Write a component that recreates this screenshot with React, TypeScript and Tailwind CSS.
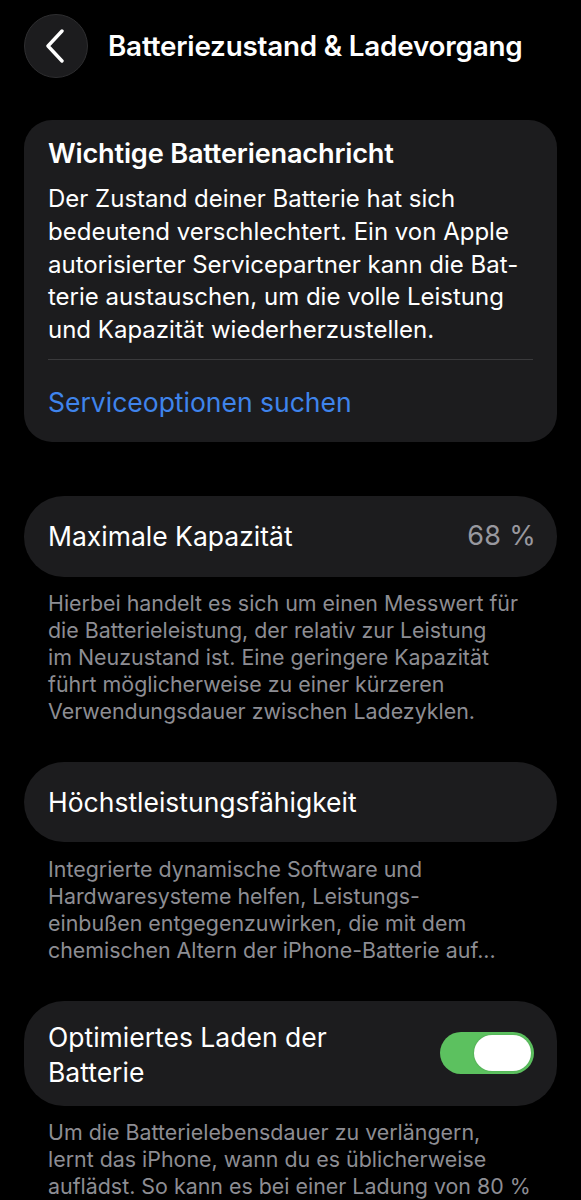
import React from "react";

const font = { fontFamily: "Inter, 'Noto Sans', 'Liberation Sans', sans-serif" };

function Lines({ lines }: { lines: string[] }) {
  return (
    <>
      {lines.map((l, i) => (
        <span key={i} className="block whitespace-nowrap">
          {l}
        </span>
      ))}
    </>
  );
}

export default function App() {
  return (
    <div className="min-h-[1200px] w-[581px] bg-black text-white overflow-hidden" style={font}>
      {/* Header */}
      <div className="flex items-center pt-[14px] pl-[24px]">
        <div className="flex h-[64px] w-[64px] items-center justify-center rounded-full bg-[#1c1c1e] border border-[#2e2e30]">
          <svg width="20" height="34" viewBox="0 0 20 34" fill="none" className="-ml-[3px]">
            <path d="M17 2 L3 17 L17 32" stroke="white" strokeWidth="3.4" strokeLinecap="round" strokeLinejoin="round" />
          </svg>
        </div>
        <div className="ml-[20px] text-[27.8px] font-semibold leading-[34px] tracking-[-0.2px]">
          Batteriezustand &amp; Ladevorgang
        </div>
      </div>

      {/* Card 1 */}
      <div className="mx-[24px] mt-[42px] rounded-[28px] bg-[#1c1c1e] px-[24px] pt-[17px] pb-[24px]">
        <div className="text-[27.2px] font-semibold leading-[34px] tracking-[-0.2px]">Wichtige Batterienachricht</div>
        <div className="mt-[12px] text-[24px] leading-[32.75px] text-white">
          <Lines
            lines={[
              "Der Zustand deiner Batterie hat sich",
              "bedeutend verschlechtert. Ein von Apple",
              "autorisierter Servicepartner kann die Bat-",
              "terie austauschen, um die volle Leistung",
              "und Kapazität wiederherzustellen.",
            ]}
          />
        </div>
        <div className="mt-[12px] h-px bg-[#3a3a3c]" />
        <div className="mt-[26px] text-[26.5px] leading-[32px] text-[#3f84ec]">Serviceoptionen suchen</div>
      </div>

      {/* Card 2 */}
      <div className="mx-[24px] mt-[54px] flex h-[81px] items-center justify-between rounded-[40px] bg-[#1c1c1e] pl-[24px] pr-[21px]">
        <div className="text-[26.5px] leading-[32px]">Maximale Kapazität</div>
        <div className="text-[27px] leading-[32px] text-[#98989f] tracking-[0.3px]">68 %</div>
      </div>
      <div className="mt-[13px] px-[48px] text-[21.4px] leading-[27px] text-[#8d8d93]">
        <Lines
          lines={[
            "Hierbei handelt es sich um einen Messwert für",
            "die Batterieleistung, der relativ zur Leistung",
            "im Neuzustand ist. Eine geringere Kapazität",
            "führt möglicherweise zu einer kürzeren",
            "Verwendungsdauer zwischen Ladezyklen.",
          ]}
        />
      </div>

      {/* Card 3 */}
      <div className="mx-[24px] mt-[37px] flex h-[80px] items-center rounded-[40px] bg-[#1c1c1e] px-[24px]">
        <div className="text-[26.5px] leading-[32px]">Höchstleistungsfähigkeit</div>
      </div>
      <div className="mt-[14px] px-[48px] text-[21.4px] leading-[27px] text-[#8d8d93]">
        <Lines
          lines={[
            "Integrierte dynamische Software und",
            "Hardwaresysteme helfen, Leistungs-",
            "einbußen entgegenzuwirken, die mit dem",
            "chemischen Altern der iPhone-Batterie auf...",
          ]}
        />
      </div>

      {/* Card 4 */}
      <div className="mx-[24px] mt-[37px] flex h-[105px] items-center justify-between rounded-[40px] bg-[#1c1c1e] pl-[24px] pr-[23px]">
        <div className="pt-[4px] text-[26.5px] leading-[35px]">
          <Lines lines={["Optimiertes Laden der", "Batterie"]} />
        </div>
        <div className="relative h-[42px] w-[94px] rounded-full bg-[#5cc15f]">
          <div className="absolute right-[3px] top-[3px] h-[36px] w-[57px] rounded-full bg-white shadow-[0_0_2px_rgba(0,0,0,0.2)]" />
        </div>
      </div>
      <div className="mt-[13px] px-[48px] text-[21.4px] leading-[27px] text-[#8d8d93]">
        <Lines
          lines={[
            "Um die Batterielebensdauer zu verlängern,",
            "lernt das iPhone, wann du es üblicherweise",
            "auflädst. So kann es bei einer Ladung von 80 %",
          ]}
        />
      </div>
    </div>
  );
}
